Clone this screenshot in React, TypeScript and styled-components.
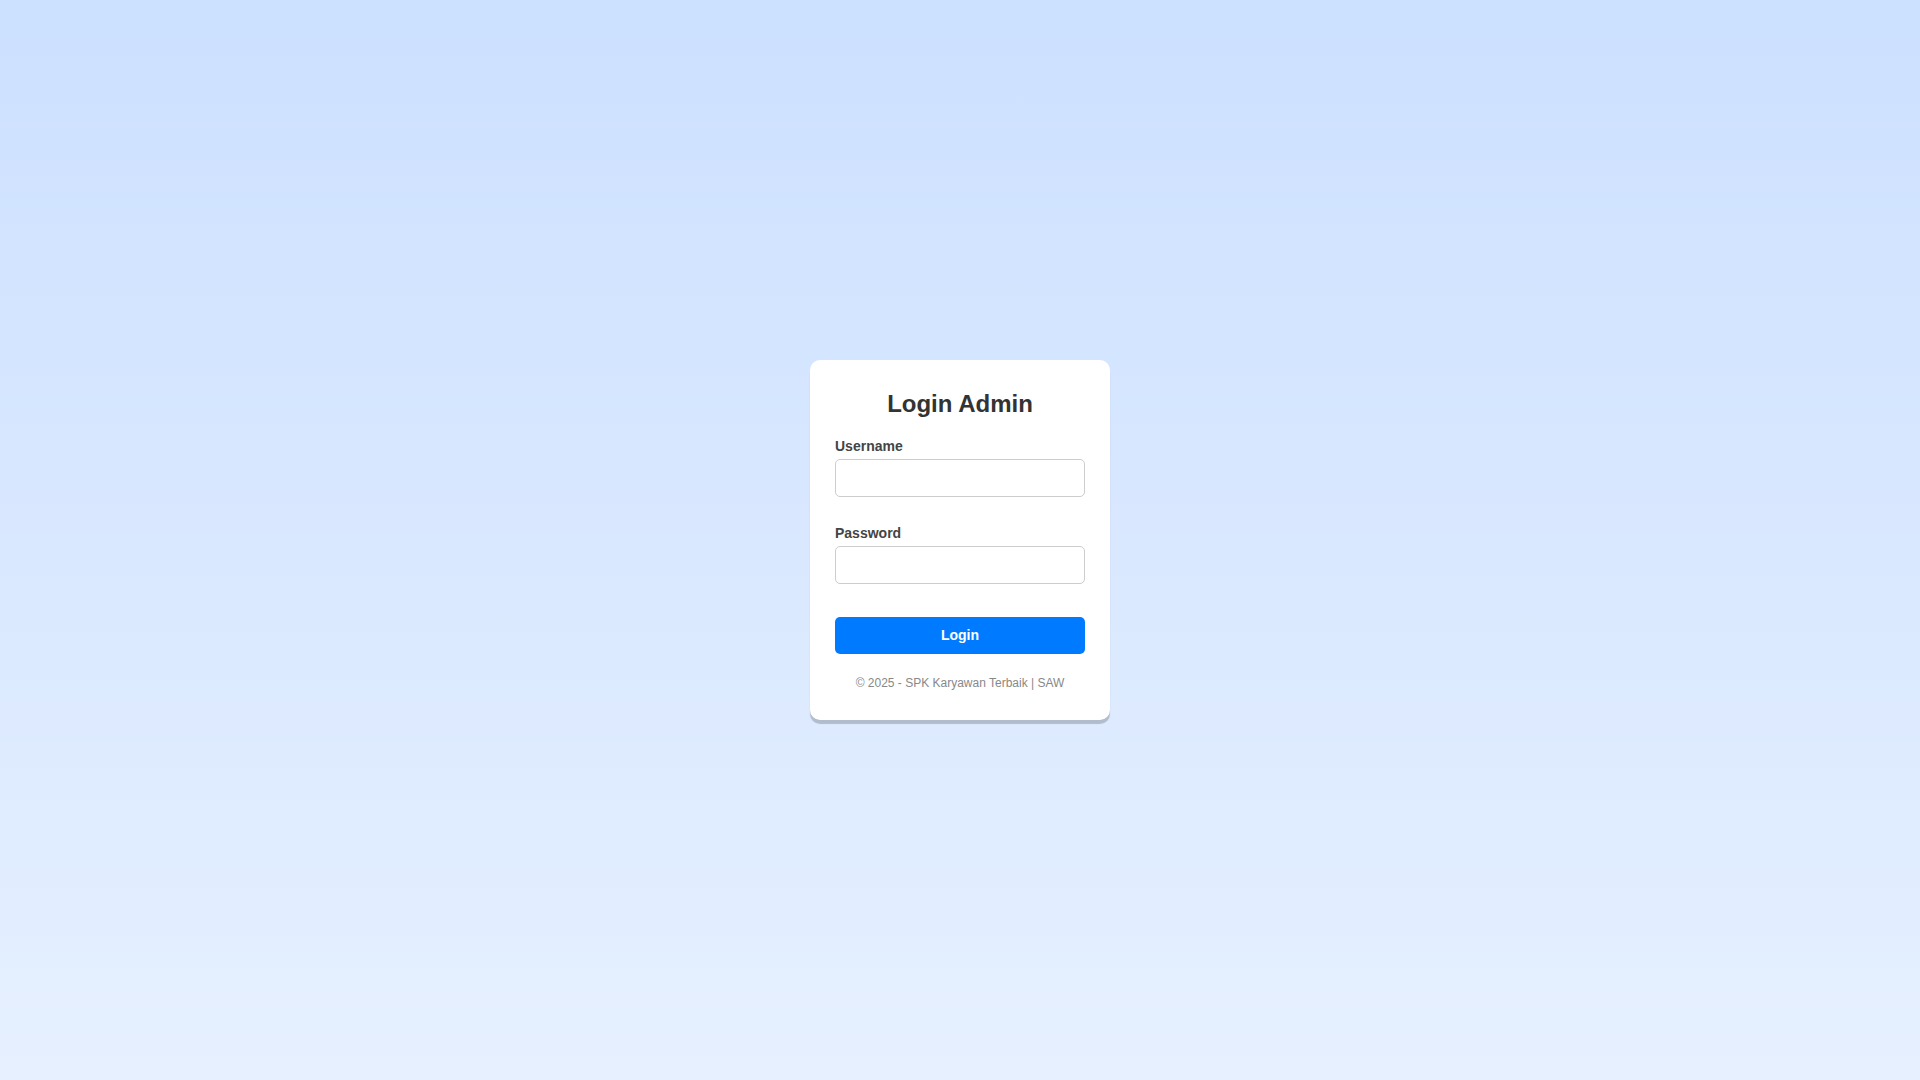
import styled, { createGlobalStyle } from "styled-components";

const GlobalStyle = createGlobalStyle`
  * {
    box-sizing: border-box;
  }
  body {
    margin: 0;
    font-family: "Liberation Sans", Arial, sans-serif;
  }
`;

const Page = styled.div`
  display: flex;
  align-items: center;
  justify-content: center;
  min-height: 100vh;
  background: linear-gradient(to bottom, #cce0ff, #e6f0ff);
`;

const Card = styled.div`
  width: 300px;
  padding: 30px 25px;
  background: #ffffff;
  border-radius: 10px;
  box-shadow: 0 4px 1px rgba(0, 0, 0, 0.2);
`;

const Title = styled.h2`
  margin: 0 0 20px;
  font-size: 24px;
  font-weight: bold;
  color: #333333;
  text-align: center;
`;

const Form = styled.form`
  display: flex;
  flex-direction: column;
`;

const Field = styled.div`
  display: flex;
  flex-direction: column;
  margin-bottom: 28px;
`;

const Label = styled.label`
  margin-bottom: 5px;
  font-size: 14px;
  font-weight: bold;
  color: #444444;
`;

const Input = styled.input`
  width: 100%;
  height: 38px;
  padding: 10px;
  font-family: inherit;
  font-size: 14px;
  border: 1px solid #cccccc;
  border-radius: 5px;
  outline: none;
`;

const Button = styled.button`
  width: 100%;
  margin-top: 5px;
  padding: 10px;
  font-family: inherit;
  font-size: 14px;
  line-height: 17px;
  font-weight: bold;
  color: #ffffff;
  background: #007bff;
  border: none;
  border-radius: 5px;
  cursor: pointer;
`;

const Footer = styled.p`
  margin: 22px 0 0;
  font-size: 12px;
  color: #888888;
  text-align: center;
`;

const App = () => {
  return (
    <>
      <GlobalStyle />
      <Page>
        <Card>
          <Title>Login Admin</Title>
          <Form onSubmit={(e) => e.preventDefault()}>
            <Field>
              <Label htmlFor="username">Username</Label>
              <Input id="username" type="text" />
            </Field>
            <Field>
              <Label htmlFor="password">Password</Label>
              <Input id="password" type="password" />
            </Field>
            <Button type="submit">Login</Button>
          </Form>
          <Footer>© 2025 - SPK Karyawan Terbaik | SAW</Footer>
        </Card>
      </Page>
    </>
  );
};

export default App;
